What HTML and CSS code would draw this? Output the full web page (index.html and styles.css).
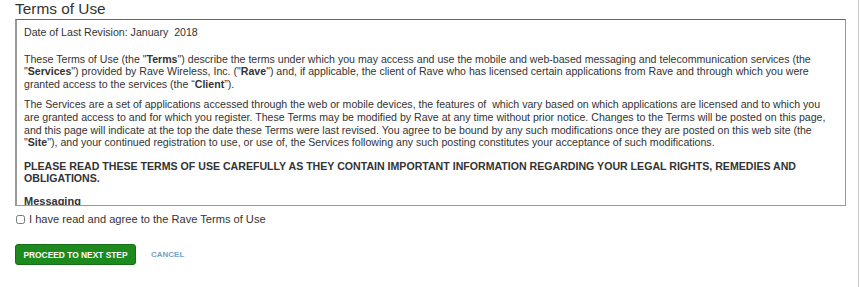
FILE: index.html
```html
<!DOCTYPE html>
<html>
<head>
<meta charset="utf-8">
<link rel="stylesheet" href="styles.css">
</head>
<body>
<div class="page">
  <main class="content">
    <h1 class="title">Terms of Use</h1>
    <div class="terms-box">
      <p class="rev">Date of Last Revision: January&nbsp; 2018</p>
      <p>These Terms of Use (the "<b>Terms</b>") describe the terms under which you may access and use the mobile and web-based messaging and telecommunication services (the "<b>Services</b>") provided by Rave Wireless, Inc. ("<b>Rave</b>") and, if applicable, the client of Rave who has licensed certain applications from Rave and through which you were granted access to the services (the “<b>Client</b>”).</p>
      <p>The Services are a set of applications accessed through the web or mobile devices, the features of&nbsp; which vary based on which applications are licensed and to which you are granted access to and for which you register. These Terms may be modified by Rave at any time without prior notice. Changes to the Terms will be posted on this page, and this page will indicate at the top the date these Terms were last revised. You agree to be bound by any such modifications once they are posted on this web site (the "<b>Site</b>"), and your continued registration to use, or use of, the Services following any such posting constitutes your acceptance of such modifications.</p>
      <p class="caps">PLEASE READ THESE TERMS OF USE CAREFULLY AS THEY CONTAIN IMPORTANT INFORMATION REGARDING YOUR LEGAL RIGHTS, REMEDIES AND OBLIGATIONS.</p>
      <p class="heading">Messaging</p>
      <p>Rave provides a messaging service that allows you to receive notifications.</p>
    </div>
    <label class="agree"><input type="checkbox" class="check"> I have read and agree to the Rave Terms of Use</label>
    <div class="actions">
      <button class="btn-primary" type="button">PROCEED TO NEXT STEP</button>
      <a class="cancel" href="#">CANCEL</a>
    </div>
  </main>
  <div class="rule"></div>
</div>
</body>
</html>
```
FILE: styles.css
```css
html, body {
  margin: 0;
  padding: 0;
  background: #fff;
}
body {
  font-family: Arial, "Liberation Sans", sans-serif;
  color: #333;
  overflow: hidden;
}
.page {
  display: flex;
  height: 287px;
}
.content {
  width: 831px;
  padding-left: 15px;
  flex: none;
}
.rule {
  width: 1px;
  margin-left: 12px;
  background: #c8c8c8;
  height: 287px;
}
.title {
  margin: 0;
  font-size: 15.4px;
  font-weight: normal;
  line-height: 17px;
  color: #333;
  margin-bottom: 2px;
}
.terms-box {
  height: 179px;
  overflow: hidden;
  border: 1px solid #999;
  border-top-color: #666;
  border-left: 2px solid #999;
  padding: 6px 8px 0 7px;
  font-size: 10.6px;
  line-height: 12.6px;
}
.terms-box p {
  margin: 0 0 8px 0;
}
.terms-box p.rev {
  margin-bottom: 14px;
}
.terms-box b {
  font-weight: bold;
}
.caps {
  font-size: 10.6px;
  font-weight: bold;
  line-height: 12.6px;
  margin-top: 11px !important;
  margin-bottom: 10px !important;
}
.heading {
  font-weight: bold;
  font-size: 11px;
}
.agree {
  display: flex;
  align-items: center;
  gap: 4px;
  margin-top: 6px;
  font-size: 11.1px;
  line-height: 15px;
  color: #333;
}
.check {
  margin: 0 0 0 1px;
  width: 9px;
  height: 9px;
}
.actions {
  display: flex;
  align-items: center;
  gap: 15px;
  margin-top: 17px;
}
.btn-primary {
  background: #1c8a1c;
  border: 1px solid #176e17;
  border-radius: 3px;
  color: #fff;
  font-family: Arial, "Liberation Sans", sans-serif;
  font-weight: bold;
  font-size: 8.4px;
  height: 21px;
  width: 121px;
  padding: 0;
}
.cancel {
  color: #6fa3d0;
  font-weight: bold;
  font-size: 8px;
  text-decoration: none;
}
```
